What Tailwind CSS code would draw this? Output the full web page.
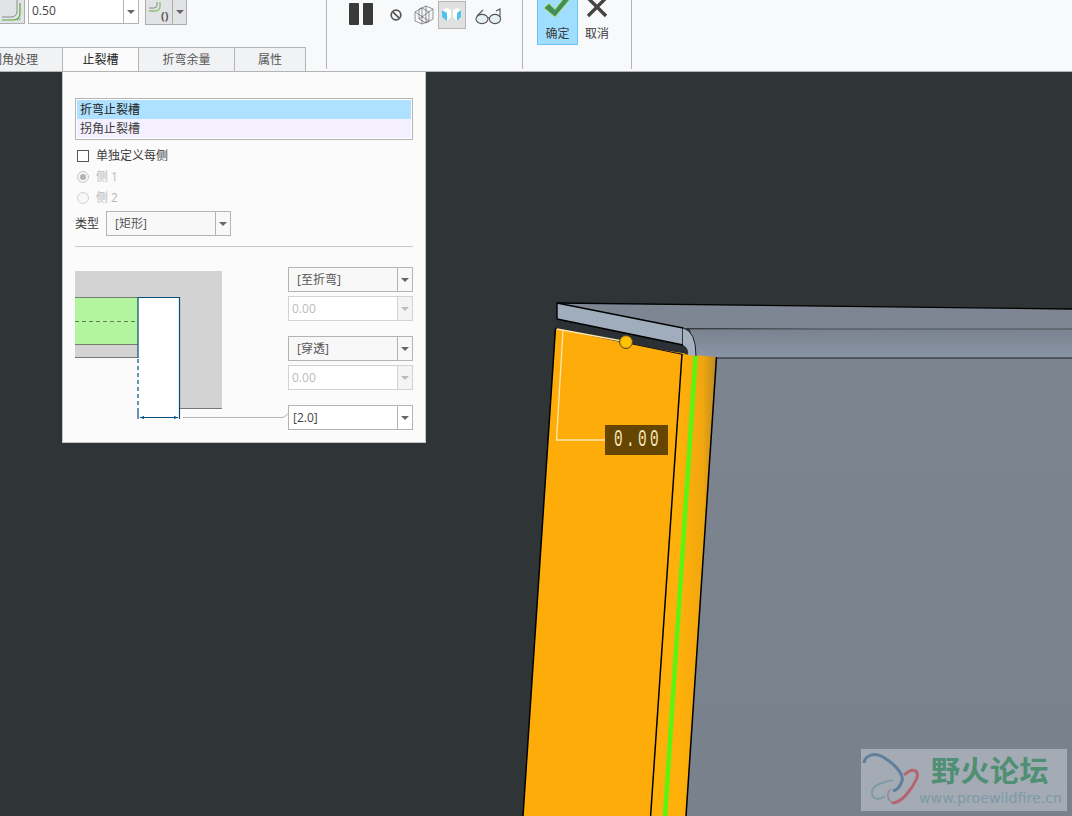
<!DOCTYPE html>
<html lang="zh">
<head>
  <meta charset="UTF-8" />
  <title>止裂槽</title>
  <script src="https://cdn.jsdelivr.net/npm/@tailwindcss/browser@4"></script>
</head>
<body class="w-[1072px] h-[816px] overflow-hidden flex flex-col bg-[#2f3536] text-[12px] text-[#3c3c3c] font-['Open_Sans','Noto_Sans_CJK_SC',sans-serif]">

  <!-- ribbon -->
  <header class="h-[72px] shrink-0 flex items-start bg-[#f8f9fb] border-b border-[#b4b4b4] overflow-hidden">
    <section class="w-[326px] shrink-0 flex flex-col">
      <div class="h-[23px] flex items-start">
        <div class="w-[25px] h-[24px] bg-[#e2e3e5] border-r border-b border-[#adadad]">
          <svg width="24" height="23" fill="none"><path d="M17 0V11Q17 17 11 17H2" stroke="#8a8a8a"/><path d="M20 3V13Q20 20 13 20H2" stroke="#55a83a" stroke-width="1.2"/><path d="M17 20h3M20 18v2" stroke="#7a8fa8" stroke-dasharray="1 1"/></svg>
        </div>
        <div class="ml-[3px] w-[111px] h-[24px] flex bg-white border-x border-b border-[#b4b4b4]">
          <span class="flex-1 pl-[3px] leading-[22px] text-[#444]">0.50</span>
          <span class="w-[15px] flex items-center justify-center border-l border-[#b4b4b4]"><i class="w-0 h-0 border-x-[4px] border-x-transparent border-t-[4px] border-t-[#666]"></i></span>
        </div>
        <div class="ml-[6px] w-[42px] h-[25px] flex bg-[#e2e3e5] border-x border-b border-[#adadad]">
          <svg width="27" height="24" fill="none" class="border-r border-[#adadad]"><path d="M14 2V6Q14 11 9 11H3" stroke="#8fc27a" stroke-width="1.4"/><path d="M11 2V5Q11 8 8 8H3" stroke="#8a8a8a"/><text x="15" y="20" font-size="11" font-weight="700" fill="#555">()</text></svg>
          <span class="flex-1 flex items-center justify-center"><i class="w-0 h-0 border-x-[4px] border-x-transparent border-t-[4px] border-t-[#666]"></i></span>
        </div>
      </div>
      <nav class="mt-[24px] h-[24px] flex text-[#555]">
        <div class="ml-[-30px] w-[93px] pr-[4px] flex items-center justify-center bg-[#f1f2f4] border-t border-r border-[#b4b4b4]">圆角处理</div>
        <div class="w-[76px] flex items-center justify-center bg-[#fbfbfb] border-t border-r border-[#b4b4b4] text-[#222]">止裂槽</div>
        <div class="w-[96px] flex items-center justify-center bg-[#f1f2f4] border-t border-r border-[#b4b4b4]">折弯余量</div>
        <div class="w-[71px] flex items-center justify-center bg-[#f1f2f4] border-t border-r border-[#b4b4b4]">属性</div>
      </nav>
    </section>
    <div class="w-px h-[69px] bg-[#b4b4b4] shrink-0"></div>

    <section class="w-[195px] shrink-0 h-[30px] pl-[22px] flex items-center">
      <svg width="24" height="22" class="-mt-[2px]"><rect x="0" width="10" height="22" rx="1" fill="#3a3a3a"/><rect x="14" width="10" height="22" rx="1" fill="#3a3a3a"/></svg>
      <svg width="12" height="12" fill="none" class="ml-[17px]"><circle cx="6" cy="6" r="4.8" stroke="#555" stroke-width="1.7"/><path d="M2.8 2.8L9.2 9.2" stroke="#555" stroke-width="1.7"/></svg>
      <svg width="20" height="20" fill="none" stroke="#666" stroke-width=".7" class="ml-[12px]"><path d="M5 4L12 1L19 4V14L12 18L5 14Z"/><path d="M1 7L8 3L15 7V16L8 19L1 16Z"/><path d="M8 3V19M12 1V18M1 7L15 16M19 4L5 14"/></svg>
      <div class="ml-[4px] w-[28px] h-[28px] flex items-center justify-center bg-[#e0e0e0] border border-[#b4b4b4]">
        <svg width="20" height="14"><path d="M0 2L5 0L9 2V9L5 13L0 9Z" fill="#fff"/><path d="M0 2L5 5V13L0 9Z" fill="#4fc3ec"/><path d="M11 2L15 0L19 2V9L15 13L11 9Z" fill="#fff"/><path d="M19 2L15 5V13L19 9Z" fill="#4fc3ec"/></svg>
      </div>
      <svg width="27" height="17" fill="none" stroke="#555" stroke-width="1.1" class="ml-[9px] mt-[2px]"><ellipse cx="7" cy="11" rx="6" ry="4.6" fill="#e4f0f4"/><ellipse cx="20" cy="11" rx="5.6" ry="4.6" fill="#e4f0f4"/><path d="M13 10Q14 9 14.5 10M2 8L8 2M25 9V1L21 3"/></svg>
    </section>
    <div class="w-px h-[69px] bg-[#b4b4b4] shrink-0"></div>

    <section class="w-[108px] shrink-0 pl-[14px] flex items-start">
      <div class="w-[41px] h-[45px] flex flex-col items-center bg-[#a0deff] border-x border-b border-[#6cc4f5]">
        <svg width="28" height="21" class="overflow-visible"><path d="M0 8L5 3.500L11 9.500L20 -2H27L11 17Z" fill="#3d8f5c" stroke="#d9dc45" stroke-width=".8"/></svg>
        <span class="mt-[4px] leading-[17px]">确定</span>
      </div>
      <div class="ml-[7px] w-[24px] flex flex-col items-center">
        <svg width="22" height="22"><path d="M2 -2L20 16M20 -2L2 16" stroke="#444" stroke-width="3.4"/></svg>
        <span class="mt-[3px] leading-[17px]">取消</span>
      </div>
    </section>
    <div class="w-px h-[69px] bg-[#b4b4b4] shrink-0"></div>
  </header>

  <!-- graphics window -->
  <main class="relative flex-1">
    <svg class="absolute inset-0" width="1072" height="744" viewBox="0 72 1072 744" fill="none">
      <defs>
        <linearGradient id="bend" x1="0" x2="1" y1="0" y2="0"><stop offset=".45" stop-color="#ffb00a"/><stop offset=".8" stop-color="#f0a60e"/><stop offset="1" stop-color="#b98a28"/></linearGradient>
        <linearGradient id="band" x1="0" x2="0" y1="0" y2="1"><stop offset="0" stop-color="#79828e"/><stop offset=".7" stop-color="#8590a0"/><stop offset="1" stop-color="#8a95a4"/></linearGradient>
        <linearGradient id="face" x1="0" x2="0" y1="0" y2="1"><stop offset="0" stop-color="#7b848f"/><stop offset="1" stop-color="#78818c"/></linearGradient>
      </defs>
      <!-- back wall and top band -->
      <path d="M716 357H1072V816H686Z" fill="url(#face)"/>
      <path d="M690 329H1072V358H696Z" fill="url(#band)"/>
      <path d="M557 303L1072 309V331L690 328L683 328Z" fill="#7d8692"/>
      <path d="M557 303L1072 309" stroke="#000" stroke-width="1.400"/>
      <path d="M690 329H1072" stroke="#3a4048" stroke-width=".8"/>
      <path d="M696 358H1072" stroke="#1c2024"/>
      <!-- orange flange -->
      <path d="M555.500 328L682 354L650.600 816H523Z" fill="#fdac0a"/>
      <path d="M682 354L716.500 357L686 816H650.600Z" fill="url(#bend)"/>
      <path d="M695.600 356L665 816" stroke="#5ff312" stroke-width="4.600"/>
      <path d="M555.500 328L523 816M682 354L650.600 816M716.500 357L686 816" stroke="#000" stroke-width="1.500"/>
      <!-- lip, gap and corner -->
      <path d="M557 319L683 345L688 349L686 354L556 327Z" fill="#2a3034"/>
      <path d="M628 345L685 354" stroke="#fdac0a" stroke-width="1.200"/>
      <path d="M557 303L683 328V345L557 319Z" fill="#a0adbd" stroke="#000" stroke-width="1.400" stroke-linejoin="round"/>
      <path d="M683 328Q696 331 696 356L688 355Q689 348 683 345Z" fill="#a4b1c0"/>
      <path d="M683 328Q696 331 696 356" stroke="#1a1e22"/>
      <path d="M555.500 328L683 354.500" stroke="#111"/>
      <!-- dimension handle -->
      <path d="M557 329L622 341M563 330L556.500 440H605" stroke="#ffe7ae" stroke-width="1.300"/>
      <circle cx="626" cy="342" r="6.500" fill="#fdac0a" stroke="#4a4a30"/>
      <circle cx="626" cy="342" r="4.800" fill="#ffc400"/>
    </svg>

    <div class="absolute left-[605px] top-[353px] w-[63px] h-[30px] bg-[#664500] overflow-hidden">
      <span class="block ml-[9px] scale-x-[0.6] origin-left text-[#f6e7bd] text-[24px] font-['Liberation_Mono',monospace] leading-[30px] tracking-[5.600px] whitespace-nowrap">0.00</span>
    </div>

    <!-- watermark -->
    <div class="absolute left-[861px] top-[677px] w-[206px] h-[62px] bg-[#a4abb4]">
      <svg class="absolute left-0 top-0" width="60" height="62" fill="none">
        <path d="M3 14C4 6 14 3 22 8C32 14 43 24 41 32C39 38 36 41 32 42" stroke="#5f7f9c" stroke-width="3"/>
        <path d="M32 31C22 33 11 36 11 43C11 50 18 52 24 47" stroke="#7f99a8" stroke-width="2"/>
        <path d="M31 54C41 54 51 40 56 29C58 21 52 18 43 26" stroke="#b5656e" stroke-width="3"/>
        <path d="M31 54C26 50 25 44 30 40" stroke="#8e8a96" stroke-width="1.500"/>
      </svg>
      <span class="absolute left-[70px] top-[3px] text-[29px] leading-[34px] font-bold tracking-[0.5px] text-[#4f8f73] whitespace-nowrap font-['Noto_Sans_CJK_SC',sans-serif]">野火论坛</span>
      <span class="absolute left-[58px] top-[39px] text-[14.200px] leading-[20px] text-[#7c9aa6] whitespace-nowrap font-['DejaVu_Sans',sans-serif]">www.proewildfire.cn</span>
    </div>

    <!-- relief panel -->
    <div class="absolute left-[62px] top-0 w-[364px] h-[371px] bg-[#fbfbfb] border-x border-b border-[#c4c4c4] pl-[12px] pr-[12px] pt-[26px]">
      <div class="h-[42px] border border-[#b4b4b4] p-px bg-white">
        <div class="h-[19px] leading-[19px] pl-[3px] bg-[#aee0ff] text-[#222]">折弯止裂槽</div>
        <div class="h-[19px] leading-[19px] pl-[3px] bg-[#f5f0ff]">拐角止裂槽</div>
      </div>

      <div class="mt-[5px] h-[21px] flex items-center pl-[2px] gap-[7px]">
        <span class="w-[12px] h-[12px] border border-[#555] bg-white"></span>
        <span>单独定义每侧</span>
      </div>
      <div class="h-[21px] flex items-center pl-[2px] gap-[7px] text-[#b9b9b9]">
        <span class="w-[12px] h-[12px] rounded-full border border-[#c8c8c8] bg-[#f4f4f4] flex items-center justify-center"><i class="w-[6px] h-[6px] rounded-full bg-[#b4b4b4]"></i></span>
        <span>侧 1</span>
      </div>
      <div class="h-[21px] flex items-center pl-[2px] gap-[7px] text-[#b9b9b9]">
        <span class="w-[12px] h-[12px] rounded-full border border-[#d0d0d0] bg-[#f8f8f8]"></span>
        <span>侧 2</span>
      </div>

      <div class="mt-[3px] flex items-center">
        <span class="w-[31px]">类型</span>
        <div class="w-[125px] h-[25px] flex bg-[#f8f8f8] border border-[#b4b4b4]">
          <span class="flex-1 pl-[8px] leading-[23px] text-[#555]">[矩形]</span>
          <span class="w-[15px] flex items-center justify-center border-l border-[#b4b4b4]"><i class="w-0 h-0 border-x-[4px] border-x-transparent border-t-[4px] border-t-[#666]"></i></span>
        </div>
      </div>

      <div class="mt-[10px] h-px bg-[#c8c8c8]"></div>

      <div class="mt-[20px] flex justify-between items-start">
        <svg width="213" height="150" fill="none" class="mt-[4px]">
          <path d="M0 0H147V137.500H104V87H0Z" fill="#d3d3d3"/>
          <path d="M0 26.500H63V73.500H0Z" fill="#b3f59f"/>
          <path d="M0 26.500H63M0 73.500H63" stroke="#6f7f6c"/>
          <path d="M0 86.500H63M105 137.500H147" stroke="#777"/>
          <path d="M0 50.500H63" stroke="#5f7f5c" stroke-dasharray="4 3"/>
          <path d="M63 26.500H104.500V147H63Z" fill="#fff"/>
          <path d="M63 87V26.500H104.500V148" stroke="#004f7c" stroke-width="1.200"/>
          <path d="M63 88V138" stroke="#004f7c" stroke-width="1.200" stroke-dasharray="4 3"/>
          <path d="M63 138V148" stroke="#004f7c" stroke-width="1.200"/>
          <path d="M65 146.500H103" stroke="#004f7c" stroke-width="1.200"/>
          <path d="M65 146.500L69 145V148ZM103 146.500L99 145V148Z" fill="#004f7c"/>
          <path d="M108 146.500H208L213 143" stroke="#b4b4b4"/>
        </svg>

        <div class="w-[125px] flex flex-col">
          <div class="h-[25px] flex bg-[#f8f8f8] border border-[#b4b4b4]">
            <span class="flex-1 pl-[8px] leading-[23px] text-[#555]">[至折弯]</span>
            <span class="w-[15px] flex items-center justify-center border-l border-[#b4b4b4]"><i class="w-0 h-0 border-x-[4px] border-x-transparent border-t-[4px] border-t-[#666]"></i></span>
          </div>
          <div class="mt-[4px] h-[25px] flex bg-white border border-[#d2d2d2]">
            <span class="flex-1 pl-[3px] leading-[23px] text-[#bbb]">0.00</span>
            <span class="w-[15px] flex items-center justify-center bg-[#f4f4f4] border-l border-[#d2d2d2]"><i class="w-0 h-0 border-x-[4px] border-x-transparent border-t-[4px] border-t-[#bbb]"></i></span>
          </div>
          <div class="mt-[15px] h-[25px] flex bg-[#f8f8f8] border border-[#b4b4b4]">
            <span class="flex-1 pl-[8px] leading-[23px] text-[#555]">[穿透]</span>
            <span class="w-[15px] flex items-center justify-center border-l border-[#b4b4b4]"><i class="w-0 h-0 border-x-[4px] border-x-transparent border-t-[4px] border-t-[#666]"></i></span>
          </div>
          <div class="mt-[4px] h-[25px] flex bg-white border border-[#d2d2d2]">
            <span class="flex-1 pl-[3px] leading-[23px] text-[#bbb]">0.00</span>
            <span class="w-[15px] flex items-center justify-center bg-[#f4f4f4] border-l border-[#d2d2d2]"><i class="w-0 h-0 border-x-[4px] border-x-transparent border-t-[4px] border-t-[#bbb]"></i></span>
          </div>
          <div class="mt-[15px] h-[25px] flex bg-white border border-[#b4b4b4]">
            <span class="flex-1 pl-[4px] leading-[23px] text-[#444]">[2.0]</span>
            <span class="w-[15px] flex items-center justify-center border-l border-[#b4b4b4]"><i class="w-0 h-0 border-x-[4px] border-x-transparent border-t-[4px] border-t-[#666]"></i></span>
          </div>
        </div>
      </div>
    </div>
  </main>
</body>
</html>
